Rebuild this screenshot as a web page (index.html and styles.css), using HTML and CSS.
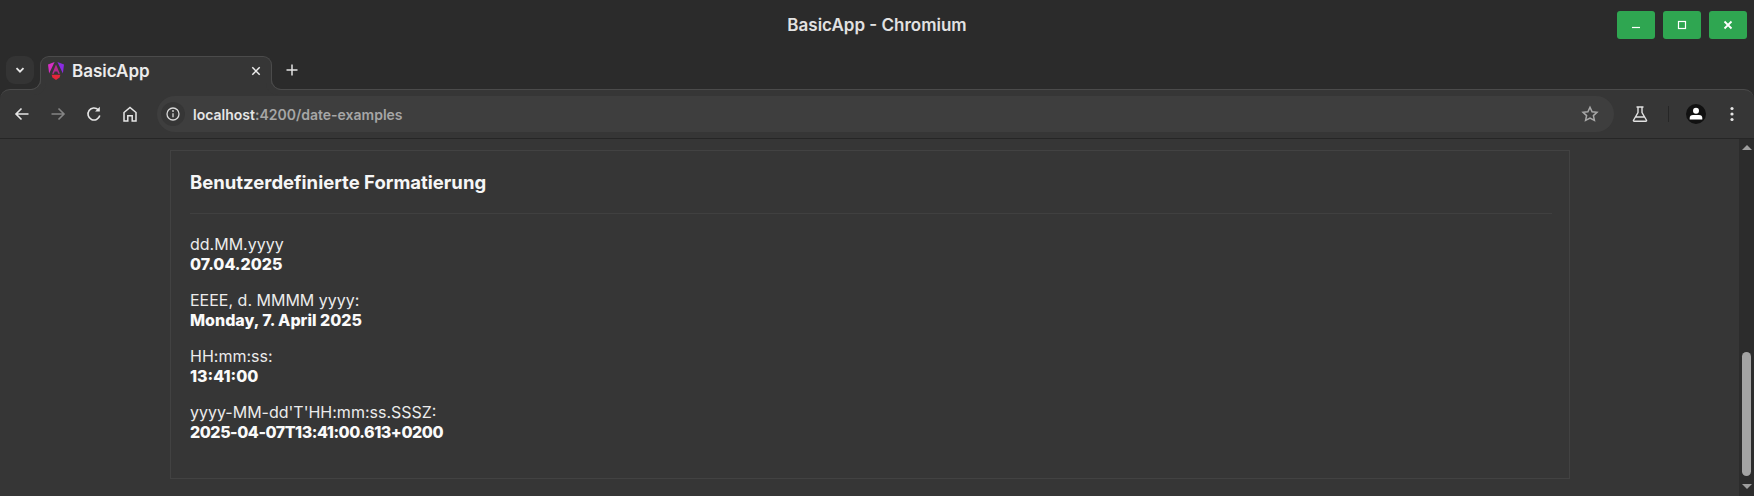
FILE: index.html
```html
<!DOCTYPE html>
<html lang="en">
<head>
  <meta charset="UTF-8" />
  <title>BasicApp - Chromium</title>
  <link rel="stylesheet" href="styles.css">
</head>
<body>
  <div class="window">
    <header class="titlebar">
      <div class="window-title">BasicApp - Chromium</div>
      <div class="window-buttons">
        <div class="win-btn">
          <svg width="12" height="12" viewBox="0 0 12 12"><path d="M2 8.500h8" stroke="#fff" stroke-width="1.200" fill="none"/></svg>
        </div>
        <div class="win-btn">
          <svg width="12" height="12" viewBox="0 0 12 12"><rect x="2.500" y="2.500" width="7" height="7" stroke="#fff" stroke-width="1.200" fill="none"/></svg>
        </div>
        <div class="win-btn">
          <svg width="12" height="12" viewBox="0 0 12 12"><path d="M2.500 2.500l7 7M9.500 2.500l-7 7" stroke="#fff" stroke-width="1.800" fill="none"/></svg>
        </div>
      </div>
    </header>

    <div class="tabstrip">
      <div class="tab-menu">
        <svg width="12" height="12" viewBox="0 0 12 12"><path d="M2.500 4.200L6 7.700l3.500-3.500" stroke="#e8e8e8" stroke-width="1.800" fill="none"/></svg>
      </div>
      <div class="tab">
        <svg class="favicon" width="18" height="20" viewBox="0 0 18 20">
          <path d="M7.600 1L1 3.600l1.100 9z" fill="#d62fc4"/>
          <path d="M10.400 1L17 3.600l-1.100 9z" fill="#8a2be2"/>
          <path d="M9 3.500L12.900 12.700h-1.700L10.300 10.500H7.700L6.800 12.700H5.100z" fill="#b52a8f"/>
          <path d="M4.600 13.800h8.800L12.600 16.500 9 19 5.400 16.500z" fill="#e5263a"/>
        </svg>
        <span class="tab-title">BasicApp</span>
        <svg class="tab-close" width="12" height="12" viewBox="0 0 12 12"><path d="M2.300 2.300l7.400 7.400M9.700 2.300l-7.400 7.400" stroke="#eee" stroke-width="1.500" fill="none"/></svg>
      </div>
      <svg class="new-tab" width="14" height="14" viewBox="0 0 14 14"><path d="M7 1.500v11M1.500 7h11" stroke="#e4e4e4" stroke-width="1.500" fill="none"/></svg>
    </div>

    <nav class="toolbar">
      <div class="tool-btn">
        <svg width="18" height="18" viewBox="0 0 18 18"><path d="M15.500 9H3.500M8.500 3.500L3 9l5.500 5.500" stroke="#e6e6e6" stroke-width="1.600" fill="none"/></svg>
      </div>
      <div class="tool-btn">
        <svg width="18" height="18" viewBox="0 0 18 18"><path d="M2.500 9h12M9.500 3.500L15 9l-5.500 5.500" stroke="#858585" stroke-width="1.600" fill="none"/></svg>
      </div>
      <div class="tool-btn">
        <svg width="18" height="18" viewBox="0 0 18 18"><path d="M14.800 10.500A6 6 0 1 1 13.300 4.800" stroke="#e6e6e6" stroke-width="1.600" fill="none"/><path d="M14.800 1.800V6.500H10.100z" fill="#e6e6e6"/></svg>
      </div>
      <div class="tool-btn">
        <svg width="18" height="18" viewBox="0 0 18 18"><path d="M3 16V7.500L9 2.500l6 5V16h-3.800v-5.200H6.800V16z" stroke="#e6e6e6" stroke-width="1.500" fill="none"/></svg>
      </div>

      <div class="address-bar">
        <div class="info-icon">
          <svg width="16" height="16" viewBox="0 0 16 16"><circle cx="8" cy="8" r="6" stroke="#d8d8d8" stroke-width="1.300" fill="none"/><path d="M8 7.200v4" stroke="#d8d8d8" stroke-width="1.300"/><circle cx="8" cy="5" r=".9" fill="#d8d8d8"/></svg>
        </div>
        <div class="url"><span class="url-host">localhost</span>:4200/date-examples</div>
        <svg class="star" width="18" height="18" viewBox="0 0 18 18"><path d="M9 2.200l2.100 4.500 4.900.6-3.600 3.300 1 4.800L9 13l-4.400 2.400 1-4.800L2 7.300l4.900-.6z" stroke="#a8a8a8" stroke-width="1.500" fill="none"/></svg>
      </div>

      <div class="tool-btn flask">
        <svg width="18" height="18" viewBox="0 0 18 18"><path d="M5.500 2h7M7 2v5.500L2.500 15.200q-.4 1 .7 1h11.600q1.100 0 .7-1L11 7.500V2M5 12h8" stroke="#e2e2e2" stroke-width="1.400" fill="none"/></svg>
      </div>
      <div class="tool-divider"></div>
      <div class="tool-btn">
        <div class="avatar">
          <svg width="20" height="20" viewBox="0 0 20 20"><circle cx="10" cy="6.800" r="3" fill="#fff"/><path d="M3.700 15.500v-1.500q0-3 3.300-3h6q3.300 0 3.300 3v1.500z" fill="#fff"/></svg>
        </div>
      </div>
      <div class="tool-btn">
        <svg width="16" height="16" viewBox="0 0 16 16"><circle cx="8" cy="2.500" r="1.600" fill="#e6e6e6"/><circle cx="8" cy="8" r="1.600" fill="#e6e6e6"/><circle cx="8" cy="13.500" r="1.600" fill="#e6e6e6"/></svg>
      </div>
    </nav>

    <div class="viewport">
      <main class="page">
        <section class="card">
          <h2 class="card-title">Benutzerdefinierte Formatierung</h2>
          <div class="card-body">
            <p class="format">dd.MM.yyyy<br><strong>07.04.2025</strong></p>
            <p class="format">EEEE, d. MMMM yyyy:<br><strong>Monday, 7. April 2025</strong></p>
            <p class="format">HH:mm:ss:<br><strong>13:41:00</strong></p>
            <p class="format">yyyy-MM-dd'T'HH:mm:ss.SSSZ:<br><strong class="timestamp">2025-04-07T13:41:00.613+0200</strong></p>
          </div>
        </section>
      </main>
      <aside class="scrollbar">
        <div class="arrow-up"></div>
        <div class="thumb"></div>
        <div class="arrow-down"></div>
      </aside>
    </div>
  </div>
</body>
</html>
```

FILE: styles.css
```css
* {
  box-sizing: border-box;
}
html, body {
  margin: 0;
  height: 100%;
  overflow: hidden;
  background: #2b2b2b;
}
body {
  font-family: Inter, "Noto Sans", sans-serif;
  color: #f0f0f0;
}
svg {
  display: block;
  flex: none;
}
.window {
  display: flex;
  flex-direction: column;
  width: 1754px;
  height: 496px;
  background: #2b2b2b;
}

/* title bar */
.titlebar {
  display: flex;
  align-items: center;
  justify-content: flex-end;
  position: relative;
  height: 56px;
  padding: 0 7px 6px 0;
  flex: none;
}
.window-title {
  position: absolute;
  left: 0;
  right: 0;
  top: 15px;
  text-align: center;
  font-size: 17px;
  line-height: 20px;
  font-weight: 600;
  color: #e2e2e2;
}
.window-buttons {
  display: flex;
  gap: 8px;
}
.win-btn {
  display: flex;
  align-items: center;
  justify-content: center;
  width: 38px;
  height: 28px;
  border-radius: 3px;
  background: #2fa651;
}

/* tabs */
.tabstrip {
  display: flex;
  align-items: flex-start;
  height: 33px;
  flex: none;
  padding-left: 6px;
}
.tab-menu {
  display: flex;
  align-items: center;
  justify-content: center;
  width: 28px;
  height: 28px;
  border-radius: 9px;
  background: #343434;
}
.tab {
  display: flex;
  align-items: center;
  position: relative;
  z-index: 1;
  width: 232px;
  height: 34px;
  margin-left: 6px;
  padding: 0 9px 6px 6px;
  border: 1px solid #4b4b4b;
  border-bottom: none;
  border-radius: 9px 9px 0 0;
  background: #363636;
}
.tab::before,
.tab::after {
  content: "";
  position: absolute;
  bottom: 0;
  width: 10px;
  height: 10px;
  border-bottom: 1px solid #4b4b4b;
}
.tab::before {
  left: -11px;
  border-right: 1px solid #4b4b4b;
  border-bottom-right-radius: 10px;
  box-shadow: 3px 3px 0 2px #363636;
}
.tab::after {
  right: -11px;
  border-left: 1px solid #4b4b4b;
  border-bottom-left-radius: 10px;
  box-shadow: -3px 3px 0 2px #363636;
}
.tab-title {
  flex: 1;
  margin-left: 7px;
  font-size: 17px;
  font-weight: 600;
  color: #ececec;
}
.new-tab {
  margin: 7px 0 0 13px;
}

/* toolbar */
.toolbar {
  display: flex;
  align-items: center;
  height: 50px;
  flex: none;
  padding: 0 4px;
  border-top: 1px solid #4b4b4b;
  border-bottom: 1px solid #262626;
  border-radius: 10px 10px 0 0;
  background: #363636;
}
.tool-btn {
  display: flex;
  align-items: center;
  justify-content: center;
  width: 36px;
  height: 36px;
  flex: none;
}
.address-bar {
  display: flex;
  align-items: center;
  flex: 1;
  height: 36px;
  margin-left: 9px;
  padding: 0 15px 0 4px;
  border-radius: 18px;
  background: #3e3e3e;
}
.info-icon {
  display: flex;
  align-items: center;
  justify-content: center;
  width: 24px;
  height: 24px;
  border-radius: 50%;
  background: #363636;
}
.url {
  flex: 1;
  margin-left: 8px;
  font-size: 14px;
  font-weight: 600;
  color: #a6a6a6;
}
.url-host {
  color: #e6e6e6;
}
.flask {
  margin-left: 8px;
}
.tool-divider {
  width: 1px;
  height: 16px;
  margin: 0 9px 0 10px;
  background: #262626;
}
.avatar {
  display: flex;
  align-items: center;
  justify-content: center;
  width: 20px;
  height: 20px;
  border-radius: 50%;
  background: #111;
}

/* page */
.viewport {
  display: flex;
  flex: 1;
  min-height: 0;
  background: #363636;
}
.page {
  flex: 1;
  padding: 11px 0 0 170px;
}
.card {
  width: 1400px;
  height: 329px;
  padding: 0 17px 0 19px;
  border: 1px solid #424242;
}
.card-title {
  margin: 0;
  padding: 19px 0 19px;
  border-bottom: 1px solid #404040;
  font-size: 18.5px;
  line-height: 24px;
  font-weight: 700;
  color: #f6f6f6;
}
.card-body {
  padding-top: 20px;
}
.format {
  margin: 0 0 16px;
  font-size: 16px;
  line-height: 20px;
  color: #ececec;
}
.format strong {
  font-weight: 800;
  color: #fafafa;
}
.format .timestamp {
  letter-spacing: -0.45px;
}

/* scrollbar */
.scrollbar {
  display: flex;
  flex-direction: column;
  align-items: center;
  width: 15px;
  flex: none;
  background: #2c2c2c;
}
.arrow-up,
.arrow-down {
  width: 0;
  height: 0;
  border-left: 5px solid transparent;
  border-right: 5px solid transparent;
}
.arrow-up {
  margin-top: 6px;
  border-bottom: 5px solid #9e9e9e;
}
.thumb {
  width: 9px;
  height: 124px;
  margin-top: 202px;
  border-radius: 5px;
  background: #a3a3a3;
}
.arrow-down {
  margin-top: 8px;
  border-top: 5px solid #9e9e9e;
}
```
